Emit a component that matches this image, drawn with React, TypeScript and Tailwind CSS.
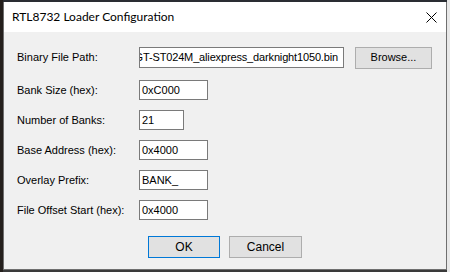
import { useState } from 'react'

const font = { fontFamily: '"Liberation Sans", Arial, sans-serif' }

function Field({ label, value, width }: { label: string; value: string; width: string }) {
  return (
    <div className="flex items-center h-[20px]">
      <span className="w-[122px] text-[11px] text-black">{label}</span>
      <div className={`${width} h-[20px] bg-white border border-[#7a7a7a] flex items-center px-[2px] text-[11px] text-black`}>
        {value}
      </div>
    </div>
  )
}

export default function App() {
  const [path] = useState('GT-ST024M_aliexpress_darknight1050.bin')

  return (
    <div className="w-[450px] h-[272px] flex bg-[#1b1b1b] overflow-hidden" style={font}>
      <div className="w-[3px] shrink-0 bg-[#241f1c]" />
      <div className="flex flex-col shrink-0 w-[444px]">
        <div className="h-[2px] bg-[#2a2d33]" />
        {/* dialog */}
        <div className="w-[444px] h-[268px] flex flex-col border border-[#6f6f6f] border-t-0 bg-[#f0f0f0]">
          <div className="h-[30px] bg-white flex items-center justify-between pl-[8px] pr-[8px]">
            <span
              className="text-[12px] text-black"
              style={{ fontFamily: 'Lato, "Noto Sans", sans-serif' }}
            >
              RTL8732 Loader Configuration
            </span>
            <svg width="11" height="11" viewBox="0 0 11 11" className="mr-[1px]">
              <path d="M0.5 0.5 L10.5 10.5 M10.5 0.5 L0.5 10.5" stroke="#000" strokeWidth="1" fill="none" />
            </svg>
          </div>

          <div className="flex flex-col pl-[13px] pt-[15px]">
            <div className="flex items-center h-[21px]">
              <span className="w-[122px] text-[11px] text-black">Binary File Path:</span>
              <div className="w-[205px] h-[21px] bg-white border border-[#7a7a7a] flex items-center justify-end overflow-hidden pr-[5px] text-[11px] tracking-[-0.15px] text-black whitespace-nowrap">
                <span className="shrink-0">{path}</span>
              </div>
              <button className="ml-[11px] w-[77px] h-[22px] bg-[#e1e1e1] border border-[#adadad] text-[11px] text-black">
                Browse...
              </button>
            </div>

            <div className="flex flex-col gap-[10px] mt-[12px]">
              <Field label="Bank Size (hex):" value="0xC000" width="w-[69px]" />
              <Field label="Number of Banks:" value="21" width="w-[45px]" />
              <Field label="Base Address (hex):" value="0x4000" width="w-[69px]" />
              <Field label="Overlay Prefix:" value="BANK_" width="w-[69px]" />
              <Field label="File Offset Start (hex):" value="0x4000" width="w-[69px]" />
            </div>

            <div className="flex gap-[9px] mt-[16px] pl-[131px]">
              <button className="w-[72px] h-[22px] bg-[#e1e1e1] border border-[#0078d7] text-[12px] text-black">
                OK
              </button>
              <button className="w-[73px] h-[22px] bg-[#e1e1e1] border border-[#adadad] text-[12px] text-black">
                Cancel
              </button>
            </div>
          </div>
        </div>
        <div className="h-[2px] bg-[#3a3a3a]" />
      </div>
      <div className="flex-1 bg-[#e8e8e8]" />
    </div>
  )
}
